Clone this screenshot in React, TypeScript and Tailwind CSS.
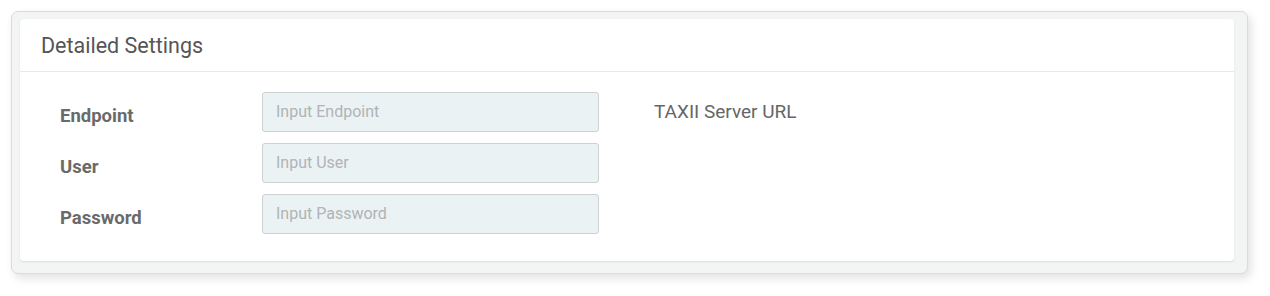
const fields = [
  { label: "Endpoint", placeholder: "Input Endpoint", type: "text", hint: "TAXII Server URL" },
  { label: "User", placeholder: "Input User", type: "text", hint: "" },
  { label: "Password", placeholder: "Input Password", type: "password", hint: "" },
];

export default function App() {
  return (
    <div className="w-[1270px] h-[296px] bg-white pt-[11px] pl-[11px] font-['Roboto',sans-serif]">
      <div className="w-[1237px] h-[263px] bg-[#f3f4f4] border border-[#d9dcdc] rounded-[7px] pl-[8px] pt-[7px] pr-[13px] pb-[12px] shadow-[3px_4px_10px_rgba(0,0,0,0.12)]">
        <div className="bg-white rounded-[4px] shadow-[0_1px_2px_rgba(0,0,0,0.1)] h-full">
          <div className="h-[53px] border-b border-[#e8eaea] flex items-center pl-[21px] pt-[2px]">
            <h2 className="text-[21.5px] text-[#555] font-normal">Detailed Settings</h2>
          </div>
          <div className="pt-[20px] pl-[40px] flex flex-col gap-[11px]">
            {fields.map((f) => (
              <div key={f.label} className="flex items-center h-[40px]">
                <label className="w-[202px] pt-[9px] text-[18.5px] font-bold text-[#6a6a6a]">{f.label}</label>
                <input
                  type={f.type}
                  placeholder={f.placeholder}
                  className="w-[337px] h-[40px] bg-[#eaf2f4] border border-[#cdd1d2] rounded-[3px] px-[13px] pb-[1px] text-[16px] text-[#555] placeholder:text-[#b0b4b5] outline-none"
                />
                {f.hint && <span className="ml-[55px] text-[19px] text-[#666]">{f.hint}</span>}
              </div>
            ))}
          </div>
        </div>
      </div>
    </div>
  );
}
